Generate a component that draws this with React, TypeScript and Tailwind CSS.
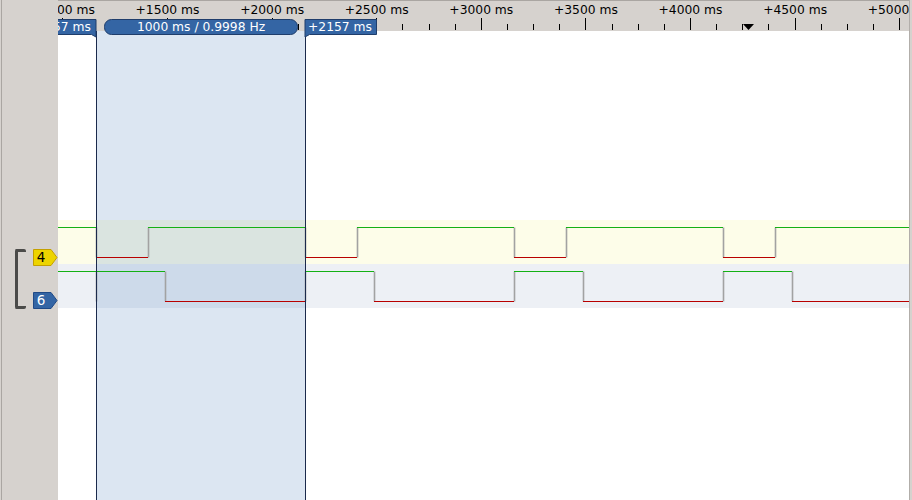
import React from "react";

// time axis: px per ms and x of +1500 ms (page coordinates)
const PX = 0.2092;
const X0 = 167.5;
const xAt = (ms: number) => X0 + (ms - 1500) * PX;

const ticks: { x: number; major: boolean; ms: number }[] = [];
for (let ms = 875; ms <= 5125; ms += 125) {
  ticks.push({ x: Math.floor(xAt(ms)) + 0.5, major: ms % 500 === 0, ms });
}

type Trace = { hi: number; lo: number; start: boolean; toggles: number[]; extra: number[] };

const traces: Trace[] = [
  { hi: 227.5, lo: 257.5, start: true, toggles: [96, 148, 305, 357, 514, 566, 723, 775], extra: [] },
  { hi: 271.5, lo: 301.5, start: true, toggles: [165, 305, 374, 514, 583, 723, 792], extra: [96] },
];

const END = 909;

const Wave: React.FC<{ t: Trace }> = ({ t }) => {
  const segs: { a: number; b: number; high: boolean }[] = [];
  let x = 58;
  let level = t.start;
  for (const e of t.toggles) {
    segs.push({ a: x, b: e, high: level });
    x = e;
    level = !level;
  }
  segs.push({ a: x, b: END, high: level });
  return (
    <g>
      {[...t.toggles, ...t.extra].map((e) => (
        <line key={"e" + e} x1={e + 0.5} x2={e + 0.5} y1={t.hi} y2={t.lo} stroke="#a2a2a2" strokeWidth={1.6} />
      ))}
      {segs.map((s, i) => (
        <line
          key={i}
          x1={s.a}
          x2={s.b}
          y1={s.high ? t.hi : t.lo}
          y2={s.high ? t.hi : t.lo}
          stroke={s.high ? "#14b014" : "#b80000"}
          strokeWidth={1}
        />
      ))}
    </g>
  );
};

const Tag: React.FC<{ label: string; fill: string; stroke: string; text: string }> = ({ label, fill, stroke, text }) => (
  <svg width="25" height="17" viewBox="0 0 25 17" className="block">
    <path d="M0.5,0.5 H18 L24,8.5 L18,16.5 H0.5 Z" fill={fill} stroke={stroke} />
    <text x="8" y="13.4" fontSize="13.5" fill={text} textAnchor="middle">
      {label}
    </text>
  </svg>
);

export default function App() {
  return (
    <div className="flex w-[912px] h-[500px] bg-[#d6d2ce] overflow-hidden font-['DejaVu_Sans',sans-serif] select-none">
      {/* channel header panel */}
      <div className="w-[58px] shrink-0 pl-px">
        <div className="h-full border-l border-[#aaa6a2] pl-[13px] pt-[249px]">
          <div className="flex gap-[7px]">
            <div className="w-[13px] h-[60px] border-l-[3px] border-y-[3px] border-[#4b4b49] rounded-[2px]" />
            <div className="flex flex-col justify-between h-[60px]">
              <Tag label="4" fill="#edd400" stroke="#c4a000" text="#000" />
              <Tag label="6" fill="#3465a4" stroke="#204a87" text="#fff" />
            </div>
          </div>
        </div>
      </div>

      {/* ruler + trace view */}
      <div className="relative w-[851px] shrink-0 flex flex-col overflow-hidden">
        <svg width="851" height="31" viewBox="58 0 851 31" className="block shrink-0">
          <line x1="58" x2="909" y1="0.5" y2="0.5" stroke="#aaa6a2" />
          {ticks.map((t) => (
            <line key={t.ms} x1={t.x} x2={t.x} y1={t.major ? 18 : 24} y2={30} stroke="#000" strokeWidth={1} />
          ))}
          {ticks
            .filter((t) => t.major)
            .map((t) => (
              <text key={"l" + t.ms} x={xAt(t.ms)} y="14" fontSize="12.3" textAnchor="middle" fill="#000">
                +{t.ms} ms
              </text>
            ))}
          <path d="M743,24 H754 L748.5,30 Z" fill="#000" />
        </svg>

        <svg width="851" height="469" viewBox="58 31 851 469" className="block bg-white">
          <rect x="58" y="220" width="851" height="44" fill="#fdfde9" />
          <rect x="58" y="264" width="851" height="44" fill="#edf0f5" />
          <rect x="96" y="31" width="210" height="469" fill="rgba(70,120,185,0.19)" />
          {traces.map((t, i) => (
            <Wave key={i} t={t} />
          ))}
          <line x1="96.5" x2="96.5" y1="31" y2="500" stroke="#1b2a4c" />
          <line x1="305.5" x2="305.5" y1="31" y2="500" stroke="#1b2a4c" />
        </svg>

        {/* cursor flags */}
        <svg width="851" height="40" viewBox="58 0 851 40" className="absolute top-0 left-0 pointer-events-none">
          <path d="M20.5,19.5 H96 V37 L91.5,34.5 H20.5 Z" fill="#3465a4" stroke="#1f3d6b" />
          <text x="91" y="31" fontSize="12.3" textAnchor="end" fill="#fff">
            +1157 ms
          </text>
          <rect x="104.5" y="19.5" width="193" height="15" rx="7" fill="#3465a4" stroke="#1f3d6b" />
          <text x="201" y="31" fontSize="12.3" textAnchor="middle" fill="#fff">
            1000 ms / 0.9998 Hz
          </text>
          <path d="M305,37 V19.5 H376.5 V34.5 H309.5 Z" fill="#3465a4" stroke="#1f3d6b" />
          <text x="308" y="31" fontSize="12.3" fill="#fff">
            +2157 ms
          </text>
        </svg>
      </div>

      <div className="w-[3px] shrink-0 border-l border-[#b2aeaa]" />
    </div>
  );
}
